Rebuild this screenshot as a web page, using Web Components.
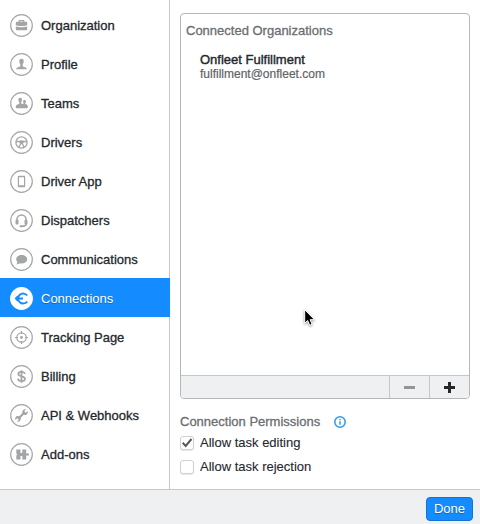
<!DOCTYPE html>
<html lang="en">
<head>
<meta charset="utf-8">
<meta name="viewport" content="width=device-width, initial-scale=1">
<title>Settings</title>
<style>
    body {
        margin: 0;
        background: #fff;
        color: #24282c;
        font: 13px/16px "Liberation Sans", Arial, sans-serif;
    }
</style>
</head>
<body>
<settings-window>
    <settings-nav slot="nav">
        <nav-item icon="organization">Organization</nav-item>
        <nav-item icon="profile">Profile</nav-item>
        <nav-item icon="teams">Teams</nav-item>
        <nav-item icon="drivers">Drivers</nav-item>
        <nav-item icon="app">Driver App</nav-item>
        <nav-item icon="dispatchers">Dispatchers</nav-item>
        <nav-item icon="communications">Communications</nav-item>
        <nav-item icon="connections" active>Connections</nav-item>
        <nav-item icon="tracking">Tracking Page</nav-item>
        <nav-item icon="billing">Billing</nav-item>
        <nav-item icon="api">API &amp; Webhooks</nav-item>
        <nav-item icon="addons">Add-ons</nav-item>
    </settings-nav>
    <organization-list heading="Connected Organizations">
        <organization-item name="Onfleet Fulfillment" email="fulfillment@onfleet.com"></organization-item>
    </organization-list>
    <permission-group heading="Connection Permissions">
        <check-option checked>Allow task editing</check-option>
        <check-option>Allow task rejection</check-option>
    </permission-group>
    <primary-button slot="footer">Done</primary-button>
</settings-window>
<mouse-pointer></mouse-pointer>

<script>
// All icons share a 23x23 box, the ring is drawn by nav-item
const ICONS = {
    organization: `
        <path d="M9.3 8V6.6h4.4V8" fill="none" stroke="currentColor" stroke-width="1.2"/>
        <path d="M6.8 7.8h9.4q1 0 1 1v2.4q-5.700 1.800-11.400 0V8.800q0-1 1-1zM5.800 12.500q5.700 1.600 11.400 0v2.700q0 1-1 1H6.800q-1 0-1-1z"/>`,
    profile: `
        <path d="M11.500 5.800c1.700 0 2.400 1.200 2.200 2.800-.1 1.300-.6 2.100-1 2.800v1.800c.7.800 3.900.7 4.200 3H6.100c.3-2.300 3.500-2.200 4.200-3v-1.800c-.4-.7-.9-1.500-1-2.800-.2-1.600.5-2.800 2.200-2.800z"/>`,
    teams: `
        <path d="M10.200 5.800c1.300 0 1.900.9 1.800 2.200-.1 1.100-.5 1.800-.8 2.300v1.500h2.500v-.6c-.3-.4-.5-.8-.6-1.400-.1-1 .4-1.700 1.400-1.700s1.500.7 1.400 1.700c-.1.600-.3 1-.6 1.400v.9c1.400.4 2.500 1 2.600 2.300 0 1.200-.6 1.900-1.500 1.900H7c-.9 0-1.400-.7-1.300-1.900.2-1.500 2-1.900 3.500-2.400v-1.700c-.4-.5-.7-1.200-.8-2.300-.1-1.300.5-2.200 1.800-2.200z"/>`,
    drivers: `
        <g fill="none" stroke="currentColor" stroke-width="1.3">
            <circle cx="11.500" cy="11.500" r="5.600"/>
            <path d="M6 10.500h11M10.700 12.500L9 16.300M12.300 12.500l1.700 3.800"/>
        </g>
        <circle cx="11.500" cy="11.300" r="2"/>`,
    app: `
        <path fill-rule="evenodd" d="M8.800 5.800h5.400q1 0 1 1v9.400q0 1-1 1H8.800q-1 0-1-1V6.800q0-1 1-1zm.2 1.500v8h5v-8z"/>`,
    dispatchers: `
        <path d="M6.900 12v-1.400a4.600 4.600 0 0 1 9.200 0V12M16.500 14.500q-.5 2.800-4.500 2.800" fill="none" stroke="currentColor" stroke-width="1.500"/>
        <rect x="5.500" y="10.800" width="3" height="4.800" rx="1"/>
        <rect x="14.500" y="10.800" width="3" height="4.800" rx="1"/>
        <rect x="9.500" y="16.300" width="3.500" height="2" rx="1"/>`,
    communications: `
        <path d="M11.700 7c3.100 0 5.500 1.800 5.500 4.200s-2.400 4.200-5.500 4.200c-.7 0-1.300-.1-1.900-.2-1 .8-2.300 1.200-3.500 1 .7-.6 1.100-1.300 1.100-2.100-.8-.8-1.200-1.800-1.200-2.900C6.200 8.800 8.600 7 11.700 7z"/>`,
    connections: `
        <path d="M17.200 8.600A5 5 0 1 0 17.200 14.400" fill="none" stroke="#148cff" stroke-width="1.800"/>
        <path d="M7 11.500h6" stroke="#148cff" stroke-width="2"/>
        <path d="M8.500 8.500v6q-2.500 0-2.500-2h-1v-2h1q0-2 2.500-2z" fill="#148cff"/>`,
    tracking: `
        <g fill="none" stroke="currentColor" stroke-width="1.200">
            <circle cx="11.500" cy="11.500" r="4.700"/>
            <path d="M11.500 5v3M11.500 15v3M5 11.500h3M15 11.500h3"/>
        </g>
        <circle cx="11.500" cy="11.500" r="1.400"/>`,
    billing: `
        <path d="M14.900 8.900c-.3-1.300-1.500-2-3.400-2-2 0-3.200.8-3.200 2.200 0 3.200 6.700 1.400 6.700 4.700 0 1.500-1.400 2.400-3.500 2.400s-3.400-.9-3.600-2.500M11.500 5.300v12.400" fill="none" stroke="currentColor" stroke-width="1.700"/>`,
    api: `
        <path d="M8 15l7-7" stroke="currentColor" stroke-width="2.200"/>
        <path d="M16 5.400l-2 2 .4 1.200 1.200.4 2-2c.6 1.700-.2 3.400-1.700 3.900-1.600.5-3.500-.6-3.700-2.300-.2-1.800 1.700-3.900 3.800-3.200zM7 17.600l2-2-.4-1.200-1.200-.4-2 2c-.6-1.700.2-3.400 1.700-3.900 1.600-.5 3.500.6 3.700 2.300.2 1.800-1.700 3.900-3.800 3.200z"/>`,
    addons: `
        <path d="M6.300 6.500h4.200v2.200q-.6 1.300.5 1.300h.8q1.100 0 .5-1.300V6.500h3.900v4h1q1.800-.6 1.800 1t-1.800 1h-1v4h-3.900v-2.200q.6-1.300-.5-1.300H11q-1.100 0-.5 1.300v2.200H6.300v-3.700q1.500-1.300 0-2.600z"/>`
};

class SettingsWindow extends HTMLElement {
    constructor() {
        super();
        this.attachShadow({ mode: 'open' }).innerHTML = `
            <style>
                :host {
                    display: flex;
                    flex-direction: column;
                    min-height: 100vh;
                }
                .body {
                    display: grid;
                    grid-template-columns: 170px 1fr;
                    flex: 1;
                }
                main {
                    display: flex;
                    flex-direction: column;
                    gap: 15px;
                    padding: 13px 10px 14px;
                    min-width: 0;
                }
                footer {
                    display: flex;
                    justify-content: flex-end;
                    padding: 7px 7px 3px;
                    border-top: 1px solid #c5c7c9;
                    background: #eef0f2;
                }
            </style>
            <div class="body">
                <slot name="nav"></slot>
                <main><slot></slot></main>
            </div>
            <footer><slot name="footer"></slot></footer>
        `;
    }
}

class SettingsNav extends HTMLElement {
    constructor() {
        super();
        this.attachShadow({ mode: 'open' }).innerHTML = `
            <style>
                :host {
                    display: block;
                    padding: 5px 0 16px;
                    background: linear-gradient(#c5c7c9, #c5c7c9) right / 1px 100% no-repeat;
                }
            </style>
            <nav aria-label="Settings"><slot></slot></nav>
        `;
    }
}

class NavItem extends HTMLElement {
    constructor() {
        super();
        this.$shadow = this.attachShadow({ mode: 'open' });
    }

    connectedCallback() {
        this.render();
    }

    render() {
        const current = this.hasAttribute('active') ? 'aria-current="page"' : '';

        this.$shadow.innerHTML = `
            <style>
                :host {
                    display: block;
                }
                a {
                    display: flex;
                    align-items: center;
                    gap: 8px;
                    padding: 9px 10px 7px;
                    color: inherit;
                    text-decoration: none;
                    -webkit-text-stroke: 0.3px;
                }
                svg {
                    flex: none;
                    color: #a3a5a7;
                    fill: currentColor;
                }
                .ring {
                    fill: #fff;
                    stroke: currentColor;
                    stroke-width: 1.2;
                }
                :host([active]) a {
                    background: #148cff;
                    color: #fff;
                    text-shadow: 0 1px 1px rgba(0,0,0,0.3);
                    -webkit-text-stroke: 0;
                }
                :host([active]) .ring {
                    stroke: #fff;
                }
            </style>
            <a href="#${this.getAttribute('icon')}" ${current}>
                <svg width="23" height="23" viewBox="0 0 23 23" aria-hidden="true">
                    <circle class="ring" cx="11.5" cy="11.5" r="10.8"/>
                    ${ICONS[this.getAttribute('icon')]}
                </svg>
                <span><slot></slot></span>
            </a>
        `;
    }
}

class OrganizationList extends HTMLElement {
    constructor() {
        super();
        this.$shadow = this.attachShadow({ mode: 'open' });
    }

    connectedCallback() {
        this.$shadow.innerHTML = `
            <style>
                :host {
                    display: flex;
                    flex-direction: column;
                    flex: 1;
                    border: 1px solid #b4b6b8;
                    border-radius: 4px;
                    overflow: hidden;
                }
                .content {
                    flex: 1;
                    padding: 9px 5px;
                }
                h2 {
                    margin: 0 0 14px;
                    color: #6b6e71;
                    font: inherit;
                    -webkit-text-stroke: 0.3px;
                }
                .toolbar {
                    display: flex;
                    justify-content: flex-end;
                    height: 22px;
                    border-top: 1px solid #c5c7c9;
                    background: #eef0f2;
                }
                button {
                    display: grid;
                    place-items: center;
                    width: 40px;
                    padding: 0;
                    border: 0;
                    border-left: 1px solid #c5c7c9;
                    background: none;
                    color: #24282c;
                }
                button:disabled {
                    color: #929496;
                }
            </style>
            <div class="content">
                <h2>${this.getAttribute('heading')}</h2>
                <slot></slot>
            </div>
            <div class="toolbar">
                <button type="button" aria-label="Remove organization" disabled>
                    <svg width="11" height="11" viewBox="0 0 11 11"><path d="M0 4h11v3H0z" fill="currentColor"/></svg>
                </button>
                <button type="button" aria-label="Add organization">
                    <svg width="11" height="11" viewBox="0 0 11 11"><path d="M4 0h3v4h4v3H7v4H4V7H0V4h4z" fill="currentColor"/></svg>
                </button>
            </div>
        `;
    }
}

class OrganizationItem extends HTMLElement {
    constructor() {
        super();
        this.$shadow = this.attachShadow({ mode: 'open' });
    }

    connectedCallback() {
        this.$shadow.innerHTML = `
            <style>
                :host {
                    display: block;
                    padding: 0 14px;
                    line-height: 14px;
                }
                .name {
                    -webkit-text-stroke: 0.4px;
                }
                .email {
                    color: #606366;
                    font-size: 12px;
                    -webkit-text-stroke: 0.2px;
                }
            </style>
            <div class="name">${this.getAttribute('name')}</div>
            <div class="email">${this.getAttribute('email')}</div>
        `;
    }
}

class PermissionGroup extends HTMLElement {
    constructor() {
        super();
        this.$shadow = this.attachShadow({ mode: 'open' });
    }

    connectedCallback() {
        this.$shadow.innerHTML = `
            <style>
                :host {
                    display: block;
                }
                fieldset {
                    display: grid;
                    gap: 8px;
                    margin: 0;
                    padding: 0;
                    border: 0;
                }
                legend {
                    display: flex;
                    align-items: center;
                    gap: 14px;
                    margin-bottom: 5px;
                    padding: 0;
                    color: #6b6e71;
                    -webkit-text-stroke: 0.3px;
                }
            </style>
            <fieldset>
                <legend>
                    ${this.getAttribute('heading')}
                    <svg width="12" height="12" viewBox="0 0 12 12" aria-hidden="true">
                        <circle cx="6" cy="6" r="5.2" fill="none" stroke="#2a98f0" stroke-width="1.5"/>
                        <path d="M6 5.2v3.6M6 3v1.3" stroke="#2a98f0" stroke-width="1.5"/>
                    </svg>
                </legend>
                <slot></slot>
            </fieldset>
        `;
    }
}

class CheckOption extends HTMLElement {
    constructor() {
        super();
        this.$shadow = this.attachShadow({ mode: 'open' });
    }

    connectedCallback() {
        this.$shadow.innerHTML = `
            <style>
                :host {
                    display: block;
                }
                label {
                    display: flex;
                    align-items: center;
                    gap: 6px;
                    -webkit-text-stroke: 0.1px;
                }
                .box {
                    display: grid;
                }
                .box > * {
                    grid-area: 1 / 1;
                }
                input {
                    appearance: none;
                    width: 14px;
                    height: 14px;
                    margin: 0;
                    border: 1px solid #cfd1d3;
                    border-radius: 3px;
                    background: #fff;
                    box-shadow: 0 1px 1px rgba(0,0,0,0.1);
                }
                svg {
                    visibility: hidden;
                    pointer-events: none;
                }
                input:checked + svg {
                    visibility: visible;
                }
            </style>
            <label>
                <span class="box">
                    <input type="checkbox" ${this.hasAttribute('checked') ? 'checked' : ''}>
                    <svg width="14" height="14" viewBox="0 0 14 14" aria-hidden="true">
                        <path d="M2.700 6.800l3 3.200L11.500 3" fill="none" stroke="#54585c" stroke-width="2"/>
                    </svg>
                </span>
                <span><slot></slot></span>
            </label>
        `;
    }
}

class PrimaryButton extends HTMLElement {
    constructor() {
        super();
        this.attachShadow({ mode: 'open' }).innerHTML = `
            <style>
                :host {
                    display: block;
                }
                button {
                    height: 24px;
                    padding: 0 7px;
                    border: 1px solid #1173d4;
                    border-radius: 4px;
                    background: #148cff;
                    color: #fff;
                    font: inherit;
                    text-shadow: 0 1px 1px rgba(0,0,0,0.3);
                }
            </style>
            <button type="button"><slot></slot></button>
        `;
    }
}

class MousePointer extends HTMLElement {
    constructor() {
        super();
        this.attachShadow({ mode: 'open' }).innerHTML = `
            <style>
                :host {
                    position: absolute;
                    left: 304px;
                    top: 309px;
                    pointer-events: none;
                    filter: drop-shadow(0 1px 1px rgba(0,0,0,0.4));
                }
                svg {
                    display: block;
                }
            </style>
            <svg width="12" height="18" viewBox="0 0 12 18" aria-hidden="true">
                <path d="M.7.7v13.600l3-2.800 2 4.800 2.400-1-2-4.600h4.400z" stroke="#fff"/>
            </svg>
        `;
    }
}

window.customElements.define('settings-window', SettingsWindow);
window.customElements.define('settings-nav', SettingsNav);
window.customElements.define('nav-item', NavItem);
window.customElements.define('organization-list', OrganizationList);
window.customElements.define('organization-item', OrganizationItem);
window.customElements.define('permission-group', PermissionGroup);
window.customElements.define('check-option', CheckOption);
window.customElements.define('primary-button', PrimaryButton);
window.customElements.define('mouse-pointer', MousePointer);
</script>
</body>
</html>
